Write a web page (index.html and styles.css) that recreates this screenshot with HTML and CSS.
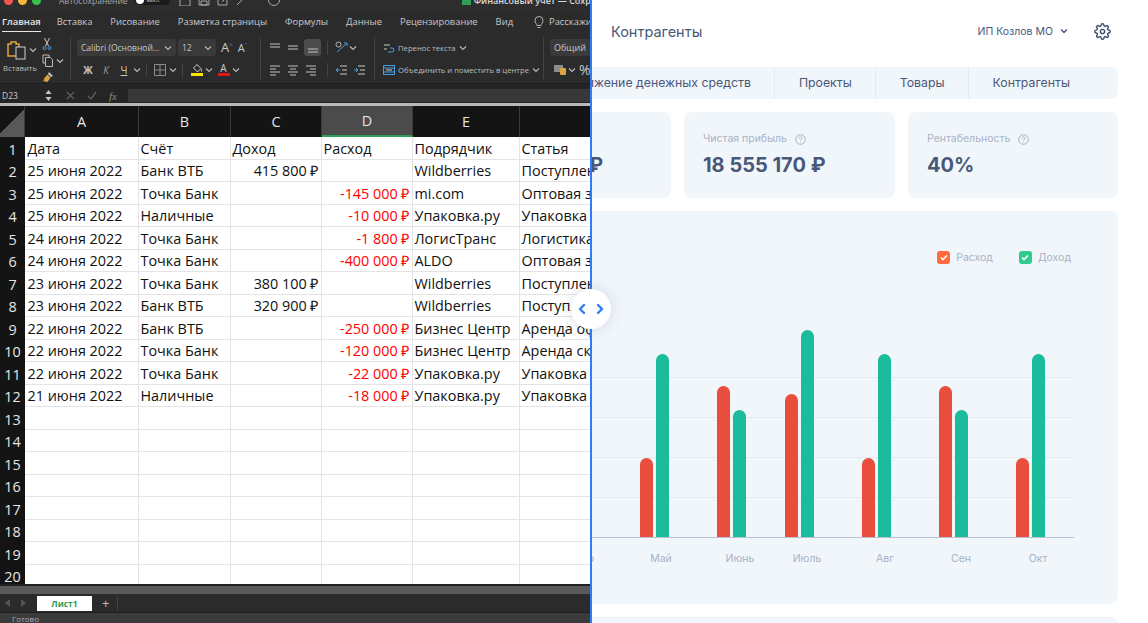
FILE: index.html
```html
<!DOCTYPE html>
<html lang="ru">
<head>
  <meta charset="UTF-8">
  <title>Финансовый учет</title>
  <link rel="stylesheet" href="styles.css">
</head>
<body>
  <div class="compare">
    <div class="excel">
      <div class="titlebar">
        <span class="light red"></span><span class="light yellow"></span><span class="light green"></span>
        <span class="autosave">Автосохранение</span>
        <span class="toggle"><i></i>выкл.</span>
        <div class="qa">
          <svg width="12" height="12" viewBox="0 0 12 12"><path d="M1 6l5-5 5 5v6H1z"/></svg>
          <svg width="12" height="12" viewBox="0 0 12 12"><path d="M1 1h10v10H1zM3 7h6v4H3z"/></svg>
          <svg width="12" height="12" viewBox="0 0 12 12"><path d="M1 2h9v9H1zM5 8l6-6"/></svg>
          <svg width="12" height="12" viewBox="0 0 12 12"><path d="M1 11L11 1"/></svg>
          <svg width="8" height="12" viewBox="0 0 8 12"><path d="M1 3l3 3 3-3"/></svg>
          <svg class="qa-circle" width="12" height="12" viewBox="0 0 12 12"><circle cx="6" cy="6" r="5.500"/></svg>
          <svg class="qa-dots" width="10" height="12" viewBox="0 0 10 12"><path d="M1 0v3M5 0v3M9 0v3"/></svg>
        </div>
        <span class="doc"><i></i>Финансовый учет — Сохранено</span>
      </div>
      <div class="xtabs">
        <span class="active">Главная</span>
        <span>Вставка</span>
        <span>Рисование</span>
        <span>Разметка страницы</span>
        <span>Формулы</span>
        <span>Данные</span>
        <span>Рецензирование</span>
        <span>Вид</span>
        <svg class="lamp" width="10" height="13" viewBox="0 0 10 13" fill="none" stroke="#b5b5b5"><path d="M3 9.500C3 8 1 7 1 4.500a4 4 0 0 1 8 0C9 7 7 8 7 9.500zM3.500 11.500h3"/></svg>
        <span>Расскажите</span>
      </div>

      <div class="ribbon">
        <div class="r-paste">
          <div class="paste-top">
            <svg width="22" height="22" viewBox="0 0 22 22" fill="none"><path d="M2 5h3V3h5v2h3v12H2z" stroke="#e8a13c" stroke-width="1.500"/><rect x="10" y="8" width="9" height="12" fill="#2b2b2b" stroke="#cfcfcf"/></svg>
            <svg class="chev" viewBox="0 0 8 8"><path d="M1 2.500l3 3 3-3"/></svg>
          </div>
          <span>Вставить</span>
        </div>
        <div class="r-clip">
          <svg width="10" height="12" viewBox="0 0 10 12" fill="none" stroke="#c9c9c9"><path d="M2.500 0l4 8M7.500 0l-4 8"/><circle cx="2.500" cy="10" r="1.500" stroke="#5b9bd5"/><circle cx="7.500" cy="10" r="1.500" stroke="#5b9bd5"/></svg>
          <div class="clip-copy">
            <svg width="12" height="13" viewBox="0 0 12 13" fill="none" stroke="#b9b9b9"><path d="M1 1h6v2M1 1v8h2"/><path d="M3.500 3.500h5l2 2v7h-7z"/></svg>
            <svg class="chev" viewBox="0 0 8 8"><path d="M1 2.500l3 3 3-3"/></svg>
          </div>
          <svg width="12" height="12" viewBox="0 0 12 12"><path d="M7 1l4 4-2 1-3-3z" fill="#c9c9c9"/><path d="M5.500 3.500l3 3-3 4.500-5-1 2-1-1-1z" fill="#d9a441"/></svg>
        </div>
        <i class="r-sep"></i>

        <div class="r-font">
          <div class="r-row">
            <span class="box box-font">Calibri (Основной...<svg class="chev" viewBox="0 0 8 8"><path d="M1 2.500l3 3 3-3"/></svg></span>
            <span class="box box-size">12<svg class="chev" viewBox="0 0 8 8"><path d="M1 2.500l3 3 3-3"/></svg></span>
            <span class="grow-a">A<sup>^</sup></span>
            <span class="shrink-a">A<sup>ˇ</sup></span>
          </div>
          <div class="r-row row-fmt">
            <b class="fmt">Ж</b><em class="fmt">К</em><u class="fmt">Ч</u>
            <svg class="chev" viewBox="0 0 8 8"><path d="M1 2.500l3 3 3-3"/></svg>
            <i class="mini-sep"></i>
            <svg class="ico-border" width="12" height="12" viewBox="0 0 12 12" fill="none" stroke="#8c8c8c"><path d="M.5.500h11v11H.500zM6 .500v11M.500 6h11"/></svg>
            <svg class="chev" viewBox="0 0 8 8"><path d="M1 2.500l3 3 3-3"/></svg>
            <i class="mini-sep"></i>
            <span class="swatch"><svg width="12" height="9" viewBox="0 0 12 9" fill="none" stroke="#cfcfcf"><path d="M6 .500l4 4-3.500 3.500-4-4zM10.500 5.500v2"/></svg><i class="bar-yellow"></i></span>
            <svg class="chev" viewBox="0 0 8 8"><path d="M1 2.500l3 3 3-3"/></svg>
            <span class="swatch swatch-a">A<i class="bar-red"></i></span>
            <svg class="chev" viewBox="0 0 8 8"><path d="M1 2.500l3 3 3-3"/></svg>
          </div>
        </div>
        <i class="r-sep"></i>

        <div class="r-align">
          <div class="r-row">
            <svg class="lines" viewBox="0 0 12 12"><path d="M1 2h10M1 5h10"/></svg>
            <svg class="lines" viewBox="0 0 12 12"><path d="M1 4h10M1 7h10"/></svg>
            <span class="selected"><svg class="lines" viewBox="0 0 12 12"><path d="M1 7h10M1 10h10"/></svg></span>
            <i class="mini-sep"></i>
            <svg class="orient" width="13" height="13" viewBox="0 0 13 13" fill="none"><path d="M2 11l9-8" stroke="#4a9fe0"/><path d="M9 2h3v3" stroke="#4a9fe0"/><circle cx="3.500" cy="3.500" r="2.500" stroke="#b9b9b9"/></svg>
            <svg class="chev" viewBox="0 0 8 8"><path d="M1 2.500l3 3 3-3"/></svg>
          </div>
          <div class="r-row">
            <svg class="lines" viewBox="0 0 12 12"><path d="M1 2h10M1 5h6M1 8h10M1 11h6"/></svg>
            <svg class="lines" viewBox="0 0 12 12"><path d="M1 2h10M3 5h6M1 8h10M3 11h6"/></svg>
            <svg class="lines right-al" viewBox="0 0 12 12"><path d="M1 2h10M5 5h6M1 8h10M5 11h6"/></svg>
            <i class="mini-sep"></i>
            <svg class="indent" viewBox="0 0 12 12"><path d="M5 2h7M5 10h7M7 6h5" stroke="#c9c9c9"/><path d="M5 6H1m2-2L1 6l2 2" stroke="#4a9fe0"/></svg>
            <svg class="indent" viewBox="0 0 12 12"><path d="M5 2h7M5 10h7M7 6h5" stroke="#c9c9c9"/><path d="M1 6h4M3 4l2 2-2 2" stroke="#4a9fe0"/></svg>
          </div>
        </div>
        <i class="r-sep"></i>

        <div class="r-wrap">
          <div class="r-row">
            <svg width="12" height="12" viewBox="0 0 12 12" fill="none"><path d="M1 3h6M1 7h3" stroke="#c9c9c9"/><path d="M5 10h4a2 2 0 0 0 0-4H7" stroke="#4a9fe0"/></svg>
            <span>Перенос текста</span>
            <svg class="chev" viewBox="0 0 8 8"><path d="M1 2.500l3 3 3-3"/></svg>
          </div>
          <div class="r-row">
            <svg width="12" height="12" viewBox="0 0 12 12" fill="none" stroke="#4a9fe0"><path d="M.500 1.500h11v9H.500zM.500 4h11M.500 8h11"/><path d="M3 6h6" stroke="#cfcfcf"/></svg>
            <span>Объединить и поместить в центре</span>
            <svg class="chev" viewBox="0 0 8 8"><path d="M1 2.500l3 3 3-3"/></svg>
          </div>
        </div>
        <i class="r-sep"></i>

        <div class="r-num">
          <span class="box box-general">Общий</span>
          <div class="r-row">
            <svg width="12" height="11" viewBox="0 0 12 11"><rect y="1" width="9" height="7" fill="#8c8c8c"/><rect x="6" y="4" width="6" height="7" rx="1" fill="#d9a441"/></svg>
            <svg class="chev" viewBox="0 0 8 8"><path d="M1 2.500l3 3 3-3"/></svg>
            <span class="percent">%</span>
          </div>
        </div>
      </div>

      <div class="formula">
        <span class="cell-name">D23</span>
        <svg class="stepper" width="7" height="11" viewBox="0 0 7 11" fill="#c9c9c9"><path d="M3.500 0l3 4h-6zM3.500 11l-3-4h6z"/></svg>
        <svg class="f-ico" width="9" height="9" viewBox="0 0 9 9" fill="none" stroke="#5c5c5c" stroke-width="1.300"><path d="M1 1l7 7M8 1L1 8"/></svg>
        <svg class="f-ico" width="10" height="9" viewBox="0 0 10 9" fill="none" stroke="#5c5c5c" stroke-width="1.300"><path d="M1 5l3 3 5-7"/></svg>
        <em class="fx">fx</em>
        <span class="f-input"></span>
      </div>

      <div class="sheet">
        <table>
          <colgroup>
            <col class="c-row"><col class="c-a"><col class="c-b"><col class="c-c"><col class="c-d"><col class="c-e"><col class="c-f">
          </colgroup>
          <thead>
            <tr><th class="corner"></th><th>A</th><th>B</th><th>C</th><th class="col-sel">D</th><th>E</th><th></th></tr>
          </thead>
          <tbody>
            <tr><th>1</th><td>Дата</td><td>Счёт</td><td>Доход</td><td>Расход</td><td>Подрядчик</td><td>Статья</td></tr>
            <tr><th>2</th><td>25 июня 2022</td><td>Банк ВТБ</td><td class="num">415 800 ₽</td><td></td><td>Wildberries</td><td>Поступление</td></tr>
            <tr><th>3</th><td>25 июня 2022</td><td>Точка Банк</td><td></td><td class="num neg">-145 000 ₽</td><td>mi.com</td><td>Оптовая закупка</td></tr>
            <tr><th>4</th><td>25 июня 2022</td><td>Наличные</td><td></td><td class="num neg">-10 000 ₽</td><td>Упаковка.ру</td><td>Упаковка</td></tr>
            <tr><th>5</th><td>24 июня 2022</td><td>Точка Банк</td><td></td><td class="num neg">-1 800 ₽</td><td>ЛогисТранс</td><td>Логистика</td></tr>
            <tr><th>6</th><td>24 июня 2022</td><td>Точка Банк</td><td></td><td class="num neg">-400 000 ₽</td><td>ALDO</td><td>Оптовая закупка</td></tr>
            <tr><th>7</th><td>23 июня 2022</td><td>Точка Банк</td><td class="num">380 100 ₽</td><td></td><td>Wildberries</td><td>Поступление</td></tr>
            <tr><th>8</th><td>23 июня 2022</td><td>Банк ВТБ</td><td class="num">320 900 ₽</td><td></td><td>Wildberries</td><td>Поступление</td></tr>
            <tr><th>9</th><td>22 июня 2022</td><td>Банк ВТБ</td><td></td><td class="num neg">-250 000 ₽</td><td>Бизнес Центр</td><td>Аренда офиса</td></tr>
            <tr><th>10</th><td>22 июня 2022</td><td>Точка Банк</td><td></td><td class="num neg">-120 000 ₽</td><td>Бизнес Центр</td><td>Аренда склада</td></tr>
            <tr><th>11</th><td>22 июня 2022</td><td>Точка Банк</td><td></td><td class="num neg">-22 000 ₽</td><td>Упаковка.ру</td><td>Упаковка</td></tr>
            <tr><th>12</th><td>21 июня 2022</td><td>Наличные</td><td></td><td class="num neg">-18 000 ₽</td><td>Упаковка.ру</td><td>Упаковка</td></tr>
            <tr><th>13</th><td></td><td></td><td></td><td></td><td></td><td></td></tr>
            <tr><th>14</th><td></td><td></td><td></td><td></td><td></td><td></td></tr>
            <tr><th>15</th><td></td><td></td><td></td><td></td><td></td><td></td></tr>
            <tr><th>16</th><td></td><td></td><td></td><td></td><td></td><td></td></tr>
            <tr><th>17</th><td></td><td></td><td></td><td></td><td></td><td></td></tr>
            <tr><th>18</th><td></td><td></td><td></td><td></td><td></td><td></td></tr>
            <tr><th>19</th><td></td><td></td><td></td><td></td><td></td><td></td></tr>
            <tr><th>20</th><td></td><td></td><td></td><td></td><td></td><td></td></tr>
          </tbody>
        </table>
      </div>

      <div class="hscroll"></div>
      <div class="sheet-tabs">
        <svg width="6" height="8" viewBox="0 0 6 8" fill="#555"><path d="M5 0v8L0 4z"/></svg>
        <svg width="6" height="8" viewBox="0 0 6 8" fill="#555"><path d="M1 0v8l5-4z"/></svg>
        <span class="sheet-tab">Лист1</span>
        <span class="add-sheet">+</span>
      </div>
      <div class="status">Готово</div>
    </div>

    <div class="divider"></div>

    <div class="dash">
      <header class="top">
        <h1>Контрагенты</h1>
        <span class="company">ИП Козлов МО</span>
        <svg class="company-chev" width="8" height="6" viewBox="0 0 8 6" fill="none" stroke="#4a5878" stroke-width="1.500"><path d="M1 1.500l3 3 3-3"/></svg>
        <svg class="gear" width="17" height="17" viewBox="0 0 24 24" fill="none" stroke="#3f4e6e" stroke-width="2" stroke-linecap="round" stroke-linejoin="round"><circle cx="12" cy="12" r="3"/><path d="M19.400 15a1.650 1.650 0 0 0 .33 1.820l.06.06a2 2 0 1 1-2.830 2.830l-.06-.06a1.650 1.650 0 0 0-1.820-.33 1.650 1.650 0 0 0-1 1.510V21a2 2 0 1 1-4 0v-.09a1.650 1.650 0 0 0-1.080-1.510 1.650 1.650 0 0 0-1.820.33l-.06.06a2 2 0 1 1-2.830-2.830l.06-.06a1.650 1.650 0 0 0 .33-1.820 1.650 1.650 0 0 0-1.510-1H3a2 2 0 1 1 0-4h.09a1.650 1.650 0 0 0 1.510-1.080 1.650 1.650 0 0 0-.33-1.820l-.06-.06a2 2 0 1 1 2.830-2.830l.06.06a1.650 1.650 0 0 0 1.820.33h.08a1.650 1.650 0 0 0 1-1.510V3a2 2 0 1 1 4 0v.09a1.650 1.650 0 0 0 1 1.510 1.650 1.650 0 0 0 1.820-.33l.06-.06a2 2 0 1 1 2.830 2.830l-.06.06a1.650 1.650 0 0 0-.33 1.820v.08a1.650 1.650 0 0 0 1.510 1H21a2 2 0 1 1 0 4h-.09a1.650 1.650 0 0 0-1.510 1z"/></svg>
      </header>

      <nav class="tabs">
        <a>Движение денежных средств</a>
        <a>Проекты</a>
        <a>Товары</a>
        <a>Контрагенты</a>
      </nav>

      <section class="cards">
        <div class="card">
          <div class="card-label">Выручка <svg width="11" height="11" viewBox="0 0 11 11" fill="none" stroke="#a9b2c4"><circle cx="5.500" cy="5.500" r="4.800"/><path d="M4 4.300a1.500 1.500 0 1 1 2.300 1.300c-.5.300-.8.600-.8 1.100M5.500 8v.6"/></svg></div>
          <div class="card-value">46 311 925 ₽</div>
        </div>
        <div class="card">
          <div class="card-label">Чистая прибыль <svg width="11" height="11" viewBox="0 0 11 11" fill="none" stroke="#a9b2c4"><circle cx="5.500" cy="5.500" r="4.800"/><path d="M4 4.300a1.500 1.500 0 1 1 2.300 1.300c-.5.300-.8.600-.8 1.100M5.500 8v.6"/></svg></div>
          <div class="card-value">18 555 170 ₽</div>
        </div>
        <div class="card">
          <div class="card-label">Рентабельность <svg width="11" height="11" viewBox="0 0 11 11" fill="none" stroke="#a9b2c4"><circle cx="5.500" cy="5.500" r="4.800"/><path d="M4 4.300a1.500 1.500 0 1 1 2.300 1.300c-.5.300-.8.600-.8 1.100M5.500 8v.6"/></svg></div>
          <div class="card-value">40%</div>
        </div>
      </section>

      <section class="chart-panel">
        <div class="legend">
          <span class="legend-item"><i class="check expense"><svg width="8" height="7" viewBox="0 0 8 7" fill="none" stroke="#fff" stroke-width="1.600"><path d="M1 3.500l2 2 4-4"/></svg></i>Расход</span>
          <span class="legend-item"><i class="check income"><svg width="8" height="7" viewBox="0 0 8 7" fill="none" stroke="#fff" stroke-width="1.600"><path d="M1 3.500l2 2 4-4"/></svg></i>Доход</span>
        </div>
        <svg class="chart" width="586" height="340" viewBox="532 264 586 340">
          <g class="grid">
            <path d="M532 377.500H1074M532 417.500H1074M532 457.500H1074M532 497.500H1074"/>
          </g>
          <path class="bar-e" d="M640 538V464.500a6.500 6.500 0 0 1 13 0V538z"/>
          <path class="bar-i" d="M656 538V360.500a6.500 6.500 0 0 1 13 0V538z"/>
          <path class="bar-e" d="M717 538V392.500a6.500 6.500 0 0 1 13 0V538z"/>
          <path class="bar-i" d="M733 538V416.500a6.500 6.500 0 0 1 13 0V538z"/>
          <path class="bar-e" d="M785 538V400.500a6.500 6.500 0 0 1 13 0V538z"/>
          <path class="bar-i" d="M801 538V336.500a6.500 6.500 0 0 1 13 0V538z"/>
          <path class="bar-e" d="M862 538V464.500a6.500 6.500 0 0 1 13 0V538z"/>
          <path class="bar-i" d="M878 538V360.500a6.500 6.500 0 0 1 13 0V538z"/>
          <path class="bar-e" d="M939 538V392.500a6.500 6.500 0 0 1 13 0V538z"/>
          <path class="bar-i" d="M955 538V416.500a6.500 6.500 0 0 1 13 0V538z"/>
          <path class="bar-e" d="M1016 538V464.500a6.500 6.500 0 0 1 13 0V538z"/>
          <path class="bar-i" d="M1032 538V360.500a6.500 6.500 0 0 1 13 0V538z"/>
          <path class="axis" d="M532 537.500H1074"/>
          <g class="ticks">
            <text x="584" y="562">Апр</text>
            <text x="661" y="562">Май</text>
            <text x="740" y="562">Июнь</text>
            <text x="807" y="562">Июль</text>
            <text x="885" y="562">Авг</text>
            <text x="961" y="562">Сен</text>
            <text x="1038" y="562">Окт</text>
          </g>
        </svg>
      </section>

      <section class="next-panel"></section>
    </div>

    <button class="handle" type="button" aria-label="Сравнить">
      <svg width="8" height="12" viewBox="0 0 8 12" fill="none" stroke="#2f7df6" stroke-width="2.400" stroke-linecap="round" stroke-linejoin="round"><path d="M6 2L2 6l4 4"/></svg>
      <svg width="8" height="12" viewBox="0 0 8 12" fill="none" stroke="#2f7df6" stroke-width="2.400" stroke-linecap="round" stroke-linejoin="round"><path d="M2 2l4 4-4 4"/></svg>
    </button>
  </div>
</body>
</html>
```

FILE: styles.css
```css
* {
  box-sizing: border-box;
}
html, body {
  height: 100%;
}
body {
  margin: 0;
  overflow: hidden;
  font-family: Inter, "Noto Sans", sans-serif;
  background: white;
}
.compare {
  position: relative;
  display: flex;
  height: 623px;
  overflow: hidden;
}

/* excel side */
.excel {
  display: flex;
  flex-direction: column;
  flex: 0 0 590px;
  width: 590px;
  overflow: hidden;
  background: #2b2b2b;
  font-family: "Open Sans", sans-serif;
  color: #c9c9c9;
}
.divider {
  flex: 0 0 2px;
  background: #2f7df6;
}
.titlebar {
  display: flex;
  align-items: center;
  flex: 0 0 24px;
  margin-top: -12px;
  padding-left: 4px;
  background: #2d2d2d;
  font-size: 8.500px;
  white-space: nowrap;
}
.titlebar > * {
  flex: none;
}
.light {
  width: 9px;
  height: 9px;
  margin-right: 5px;
  border-radius: 50%;
}
.red { background: #f0574f; }
.yellow { background: #f6b53a; }
.green { background: #37c24a; }
.autosave {
  margin-left: 13px;
  color: #a8a8a8;
}
.toggle {
  display: flex;
  align-items: center;
  gap: 3px;
  width: 35px;
  height: 10px;
  margin-left: 7px;
  padding-left: 1px;
  border-radius: 5px;
  background: #1b1b1b;
  font-size: 5px;
}
.toggle i {
  width: 8px;
  height: 8px;
  border-radius: 50%;
  background: white;
}
.qa {
  display: flex;
  gap: 7px;
  margin-left: 9px;
}
.qa svg {
  fill: none;
  stroke: #a8a8a8;
}
.qa-circle {
  margin: 0 2px 0 -2px;
}
.doc {
  display: flex;
  align-items: center;
  gap: 3px;
  margin-left: 163px;
  font-size: 9px;
  font-weight: 600;
  color: #d8d8d8;
}
.doc i {
  width: 9px;
  height: 9px;
  background: #2e9e5b;
}
.xtabs {
  display: flex;
  align-items: center;
  flex: 0 0 20px;
  gap: 18px;
  padding-left: 2px;
  font-size: 9.400px;
  white-space: nowrap;
}
.xtabs > * {
  flex: none;
}
.xtabs span {
  line-height: 18px;
}
.xtabs .active {
  border-bottom: 1px solid #e8e8e8;
  font-weight: 600;
  color: #e8e8e8;
  margin-right: -2px;
}
.lamp {
  margin: 0 -13px 0 3px;
}
.ribbon {
  display: flex;
  flex: 0 0 52px;
  font-size: 7.700px;
  white-space: nowrap;
  border-bottom: 1px solid #1d1d1d;
}
.ribbon > * {
  flex: none;
}
.chev {
  flex: none;
  width: 8px;
  height: 8px;
  fill: none;
  stroke: #b9b9b9;
  stroke-width: 1.100;
}
.r-sep {
  align-self: center;
  width: 1px;
  height: 42px;
  background: #444;
}
.mini-sep {
  width: 1px;
  height: 14px;
  background: #444;
}
.r-row {
  display: flex;
  align-items: center;
  height: 17px;
}
.r-paste {
  display: flex;
  flex-direction: column;
  width: 40px;
  padding: 6px 0 0 3px;
  color: #bbb;
}
.paste-top {
  display: flex;
  align-items: center;
  gap: 1px;
  padding-left: 3px;
  height: 24px;
  margin-bottom: 1px;
}
.r-clip {
  display: flex;
  flex-direction: column;
  align-items: flex-start;
  gap: 4px;
  width: 30px;
  padding: 6px 0 0 2px;
}
.clip-copy {
  display: flex;
  align-items: center;
  gap: 2px;
}
.r-font, .r-align, .r-wrap {
  display: flex;
  flex-direction: column;
  gap: 5px;
  padding-top: 7px;
}
.r-font {
  width: 183px;
  margin-left: 6px;
}
.box {
  display: flex;
  align-items: center;
  justify-content: space-between;
  height: 17px;
  padding: 0 4px;
  border-radius: 3px;
  background: #3a3a3a;
  font-size: 8.500px;
}
.box-font { width: 99px; }
.box-size { width: 38px; margin-left: 2px; }
.grow-a, .shrink-a {
  font-size: 13px;
  line-height: 1;
}
.grow-a { margin-left: 5px; }
.shrink-a { margin-left: 5px; font-size: 11px; }
.grow-a sup, .shrink-a sup {
  font-size: 6px;
  color: #4a9fe0;
}
.row-fmt {
  padding-left: 2px;
}
.fmt {
  width: 18px;
  font-size: 10px;
  font-style: normal;
  text-align: center;
}
em.fmt { font-style: italic; color: #999; }
.row-fmt .mini-sep { margin: 0 7px 0 5px; }
.ico-border { margin-right: 3px; }
.swatch {
  display: flex;
  flex-direction: column;
  align-items: center;
  width: 13px;
  margin-right: 2px;
  font-size: 10px;
  line-height: 10px;
}
.swatch i {
  width: 12px;
  height: 3px;
}
.swatch-a { margin-left: 4px; color: #ccc; }
.bar-yellow { background: #f6e500; }
.bar-red { background: #e8121d; }
.r-align {
  width: 113px;
  padding-left: 8px;
}
.lines {
  flex: none;
  width: 12px;
  height: 12px;
  margin-right: 6px;
  fill: none;
  stroke: #c4c4c4;
}
.selected {
  display: flex;
  align-items: center;
  justify-content: center;
  width: 17px;
  height: 17px;
  margin-left: -1px;
  border-radius: 3px;
  background: #4c4c4c;
}
.selected .lines { margin: 0; }
.r-align .mini-sep { margin: 0 7px 0 6px; }
.orient { margin-right: 1px; }
.lines.right-al { margin-right: 4px; }
.indent {
  flex: none;
  width: 12px;
  height: 12px;
  margin-right: 6px;
  fill: none;
}
.r-wrap {
  width: 168px;
  padding-left: 8px;
  color: #bdbdbd;
}
.r-wrap .r-row {
  gap: 3px;
}
.r-num {
  display: flex;
  flex-direction: column;
  gap: 5px;
  width: 60px;
  padding: 7px 0 0 6px;
}
.box-general {
  width: 50px;
  justify-content: flex-start;
  font-size: 9px;
}
.r-num .r-row {
  gap: 2px;
  padding-left: 4px;
}
.percent {
  margin-left: 1px;
  font-size: 14px;
}
.formula {
  display: flex;
  align-items: center;
  flex: 0 0 19px;
  padding: 4px 0 0 2px;
  background: #252525;
  font-size: 8.500px;
}
.cell-name { width: 43px; }
.stepper { margin-right: 14px; }
.f-ico { margin-right: 12px; }
.fx {
  width: 19px;
  font-family: "Liberation Serif", serif;
  font-size: 11px;
  color: #8c8c8c;
}
.f-input {
  flex: 1;
  height: 13px;
  background: #383838;
}
.sheet {
  flex: 0 0 481px;
  overflow: hidden;
  border-top: 3px solid #b9b9b9;
  background: white;
}
table {
  table-layout: fixed;
  width: 720px;
  border-collapse: separate;
  border-spacing: 0;
  font-family: "Open Sans", sans-serif;
  font-size: 14.400px;
  color: #111;
}
.c-row { width: 25px; }
.c-a { width: 114px; }
.c-b { width: 92px; }
.c-c { width: 91px; }
.c-d { width: 91px; }
.c-e { width: 107px; }
.c-f { width: 200px; }
thead th {
  height: 31px;
  border-right: 1px solid #3a3a3a;
  background: #141414;
  font-weight: 400;
  color: #e6e6e6;
}
.corner {
  background: linear-gradient(135deg, #141414 50%, #585858 50%);
}
.col-sel {
  border-bottom: 2px solid #2e9e5b;
  background: #4b4b4b;
}
tbody th {
  height: 22.500px;
  padding: 2px 0 0;
  background: #141414;
  font-weight: 400;
  color: #e6e6e6;
}
tbody td {
  padding: 2px 2.500px 0 1.500px;
  border-right: 1px solid #e4e4e4;
  border-bottom: 1px solid #e4e4e4;
  line-height: 18px;
  white-space: nowrap;
  overflow: hidden;
}
tbody th + td {
  padding-left: 2.500px;
}
.num {
  text-align: right;
}
.neg {
  color: #ff0000;
}
.hscroll {
  flex: 0 0 10px;
  border-top: 2px solid #222;
  background: #5a5a5a;
}
.sheet-tabs {
  display: flex;
  align-items: center;
  flex: 0 0 18px;
  padding-left: 5px;
  gap: 9px;
  background: #2b2b2b;
}
.sheet-tab {
  width: 55px;
  margin-left: 2px;
  line-height: 15px;
  background: white;
  text-align: center;
  font-size: 8.500px;
  font-weight: 700;
  color: #2e9e5b;
}
.add-sheet {
  margin-left: 1px;
  padding-right: 8px;
  border-right: 1px solid #444;
  font-size: 13px;
  line-height: 1;
  color: #bbb;
}
.status {
  flex: 1;
  padding-left: 12px;
  border-top: 1px solid #1d1d1d;
  background: #3b3b3b;
  font-size: 8px;
  line-height: 12px;
  color: #aaa;
}

/* dashboard side */
.dash {
  flex: 1;
  min-width: 0;
  overflow: hidden;
  padding-right: 30px;
  color: #4a5878;
}
.top {
  display: flex;
  align-items: center;
  height: 62px;
  padding-left: 19px;
}
.top h1 {
  margin: 0 auto 0 0;
  font-size: 14.500px;
  font-weight: 400;
}
.company {
  font-size: 10.500px;
}
.company-chev {
  margin: 0 26px 0 7px;
}
.gear {
  margin-right: 7px;
}
.tabs {
  display: flex;
  justify-content: flex-end;
  height: 32px;
  margin: 5px 0 0 -60px;
  border-radius: 8px;
  background: #f1f6fb;
  font-size: 12.300px;
  white-space: nowrap;
}
.tabs a {
  flex: none;
  padding: 0 23px 0 24px;
  line-height: 32px;
  border-left: 1px solid #e4ebf2;
}
.tabs a:first-child {
  border-left: 0;
}
.tabs a:last-child {
  padding-right: 48px;
}
.cards {
  display: grid;
  grid-template-columns: 211px 211px 210px;
  justify-content: end;
  gap: 13px;
  margin: 13px 0 0 -60px;
}
.card {
  height: 86px;
  padding: 20px 19px;
  border-radius: 8px;
  background: #f1f6fb;
}
.card-label {
  display: flex;
  align-items: center;
  gap: 8px;
  font-size: 10.500px;
  line-height: 14px;
  color: #a9b2c4;
}
.card-value {
  margin-top: 7px;
  font-size: 20px;
  font-weight: 700;
  line-height: 24px;
  white-space: nowrap;
}
.chart-panel {
  height: 393px;
  margin: 13px 0 0 -60px;
  padding-top: 39px;
  border-radius: 8px;
  background: #f1f6fb;
}
.legend {
  display: flex;
  justify-content: flex-end;
  gap: 26px;
  height: 14px;
  padding-right: 47px;
  font-size: 10.500px;
  color: #a9b2c4;
}
.legend-item {
  display: flex;
  align-items: center;
  gap: 6px;
}
.check {
  display: flex;
  align-items: center;
  justify-content: center;
  width: 13px;
  height: 13px;
  border-radius: 3px;
}
.expense { background: #ff6b3d; }
.income { background: #2ecb8e; }
.chart {
  display: block;
}
.grid path {
  fill: none;
  stroke: #e4e9f0;
}
.bar-e { fill: #e94e3d; }
.bar-i { fill: #1abc9c; }
.axis {
  fill: none;
  stroke: #b9c2d4;
}
.ticks text {
  font-size: 10.500px;
  fill: #a9b2c4;
  text-anchor: middle;
}
.next-panel {
  height: 60px;
  margin: 13px 0 0 -60px;
  border-radius: 8px;
  background: #f1f6fb;
}
.handle {
  position: absolute;
  left: 571px;
  top: 289px;
  display: flex;
  align-items: center;
  justify-content: center;
  gap: 10px;
  width: 40px;
  height: 40px;
  padding: 0;
  border: none;
  border-radius: 50%;
  background: white;
  box-shadow: 0 0 14px rgba(60, 80, 120, 0.18);
}
```
